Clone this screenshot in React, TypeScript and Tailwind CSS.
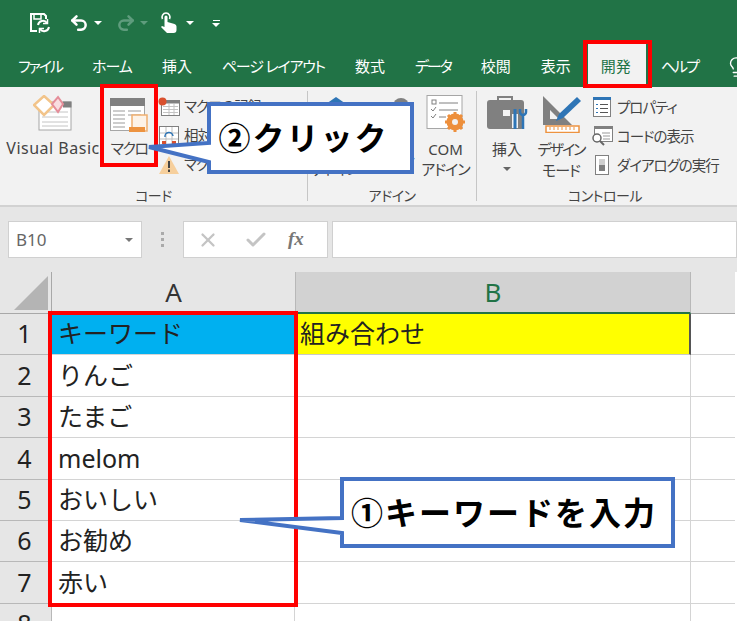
import { Undo2, Redo2, Lightbulb, X, Check } from 'lucide-react';

const tabs = [
  { label: 'ファイル', cls: 'tracking-[-2px]' },
  { label: 'ホーム', cls: 'tracking-[-1px]' },
  { label: '挿入', cls: '' },
  { label: 'ページ レイアウト', cls: 'tracking-[-1.2px]' },
  { label: '数式', cls: '' },
  { label: 'データ', cls: 'tracking-[-2px]' },
  { label: '校閲', cls: '' },
  { label: '表示', cls: '' },
  { label: '開発', cls: '' },
  { label: 'ヘルプ', cls: 'tracking-[-2px]' },
];
const rows = ['キーワード', 'りんご', 'たまご', 'melom', 'おいしい', 'お勧め', '赤い', ''];

function Caret({ className = '' }: { className?: string }) {
  return <span className={`inline-block w-0 h-0 border-x-[4px] border-x-transparent border-t-[4px] ${className}`} />;
}

function RibbonGroup({ label, className, children }: { label: string; className: string; children: React.ReactNode }) {
  return (
    <div className={`flex flex-col my-[4px] shrink-0 ${className}`}>
      <div className="flex h-[92px] shrink-0 items-start">{children}</div>
      <div className="shrink-0 text-center text-[14px] leading-[18px] tracking-[-0.5px] text-[#444] mt-[4px]">{label}</div>
    </div>
  );
}

function SmallItem({ icon, label }: { icon: React.ReactNode; label: string }) {
  return (
    <div className="flex h-[29px] items-center gap-[3px] text-[14.5px] tracking-[-1px] text-[#444] whitespace-nowrap">
      <span className="w-[24px] h-[24px] flex items-center justify-center shrink-0">{icon}</span>
      {label}
    </div>
  );
}

// box position comes in as classes, w/h are only for the outline path
function Callout({ className, w, h, tipX, tipY, y1, y2, text }: { className: string; w: number; h: number; tipX: number; tipY: number; y1: number; y2: number; text: string }) {
  return (
    <div className={`absolute flex items-center justify-center z-20 ${className}`}>
      <svg className="absolute left-0 top-0 overflow-visible" width={w} height={h}>
        <path d={`M2 2H${w - 2}V${h - 2}H2V${y2}L${tipX} ${tipY}L2 ${y1}Z`} fill="#fff" stroke="#4472c4" strokeWidth="4" />
      </svg>
      <span className="relative text-[32px] font-bold text-black tracking-[2px] whitespace-nowrap">{text}</span>
    </div>
  );
}

export default function App() {
  return (
    <div className="relative w-[737px] h-[621px] overflow-hidden bg-white font-['Noto_Sans','Noto_Sans_CJK_JP',sans-serif]">
      {/* title bar + tabs */}
      <div className="h-[87px] bg-[#217346] flex flex-col">
        <div className="h-[46px] flex items-center pl-[29px] text-white">
          <svg width="22" height="22" viewBox="0 0 22 22" fill="none" stroke="#fff" strokeWidth="2">
            <path d="M8 19H2V2h13l2 2v3" />
            <path d="M5 2v5h7V2" strokeWidth="1.5" />
            <path d="M9 13a5 5 0 0 1 9-2M20 15a5 5 0 0 1-9 2" />
            <path d="M18.500 7v4.500H14M10.500 21v-4.500H15" strokeWidth="1.5" />
          </svg>
          <Undo2 size={20} strokeWidth={3} className="ml-[18px]" />
          <Caret className="ml-[5px] border-t-white" />
          <Redo2 size={20} strokeWidth={3} className="ml-[14px] text-[#5f9c7d]" />
          <Caret className="ml-[4px] border-t-[#5f9c7d]" />
          <svg width="18" height="22" viewBox="0 0 18 22" className="ml-[12px]" fill="#fff">
            <path d="M2.500 7a4 4 0 1 1 7 0" fill="none" stroke="#fff" strokeWidth="1.600" />
            <path d="M4.500 5a1.500 1.500 0 0 1 3 0v5l7 2q2 .5 2 2.500V18a3 3 0 0 1-3 3H7l-6-6 1-1 2.500 1z" />
          </svg>
          <Caret className="ml-[8px] border-t-white" />
          <span className="ml-[18px] flex flex-col items-center gap-[2px]">
            <span className="block w-[7px] h-[1px] bg-white" />
            <Caret className="border-t-white" />
          </span>
        </div>
        <div className="relative flex-1 flex items-center pl-[18px] gap-[30px] text-[15px] text-white whitespace-nowrap [font-feature-settings:'palt']">
          {tabs.map((t) =>
            t.label === '開発' ? (
              <span key={t.label} className="relative text-[#217346] w-[31px] text-center">
                <span className="absolute left-[-13px] top-[-12px] w-[58px] h-[42px] bg-[#f2f2f2]" />
                <span className="relative">{t.label}</span>
              </span>
            ) : (
              <span key={t.label} className={t.cls}>{t.label}</span>
            ),
          )}
          <Lightbulb size={22} strokeWidth={1.5} className="-ml-[3px] shrink-0" />
        </div>
      </div>

      {/* ribbon */}
      <div className="h-[120px] bg-[#f2f2f2] border-b-2 border-[#d2d2d2] flex [font-feature-settings:'palt']">
        <RibbonGroup label="コード" className="w-[308px] border-r border-[#c6c6c6]">
          <div className="w-[106px] shrink-0 flex flex-col items-center pt-[4px] text-[16px] leading-[20px] tracking-[0.5px] text-[#444]">
            <svg width="40" height="36" viewBox="0 0 40 36">
              <rect x="6" y="7" width="32" height="28" fill="#fff" stroke="#a6a6a6" />
              <rect x="30" y="6.500" width="8.500" height="6" fill="#808080" />
              <path d="M9 17h26M9 22h26M9 27h26M9 31h26" stroke="#c4c4c4" />
              <path d="M11 1l10 9-10 10L1 10z" fill="#fff" stroke="#f2c48a" strokeWidth="2.500" />
              <path d="M25 2l5 7-5 8-6-8z" fill="#f9dde0" stroke="#e58d99" strokeWidth="2" />
            </svg>
            <span className="mt-[7px] whitespace-nowrap">Visual Basic</span>
          </div>
          <div className="w-[46px] shrink-0 flex flex-col items-center pt-[7px] text-[15px] leading-[20px] tracking-[-1.5px] text-[#444]">
            <svg width="38" height="35" viewBox="0 0 38 35">
              <rect x="0.500" y="0.500" width="34" height="32" fill="#fff" stroke="#a6a6a6" />
              <rect x="0" y="0" width="35" height="8" fill="#808080" />
              <path d="M3 13h12M18 13h13M3 17h12M18 17h13M3 21h12M3 25h12M3 29h12" stroke="#bdbdbd" strokeWidth="1.500" />
              <path d="M22 17h15v16H22z" fill="#fdf3e8" stroke="#f0b070" strokeWidth="1.500" />
              <path d="M19 29h16v5H19z" fill="#ed9340" />
            </svg>
            <span className="mt-[5px] whitespace-nowrap">マクロ</span>
          </div>
          <div className="ml-[5px] flex flex-col pt-[1px]">
            <SmallItem
              label="マクロの記録"
              icon={
                <svg width="22" height="20" viewBox="0 0 22 20">
                  <rect x="3.500" y="3.500" width="18" height="15" fill="#fff" stroke="#808080" />
                  <rect x="3.500" y="3.500" width="18" height="3" fill="#808080" />
                  <path d="M5 9.500h15M5 12.500h15M5 15.500h15M11 7v11M16 7v11" stroke="#c4c4c4" />
                  <circle cx="4.500" cy="4.500" r="4" fill="#d9502e" />
                </svg>
              }
            />
            <SmallItem
              label="相対参照で記録"
              icon={
                <svg width="20" height="20" viewBox="0 0 20 20">
                  <rect x="0.500" y="0.500" width="19" height="19" fill="#fff" stroke="#808080" />
                  <path d="M1 7h18M1 13h18M7 1v18M13 1v18" stroke="#bdbdbd" />
                  <path d="M6 11a4 4 0 0 1 8-1" fill="none" stroke="#2e75b6" strokeWidth="1.500" />
                  <rect x="3" y="15" width="4" height="3" fill="#d9502e" />
                  <rect x="13" y="15" width="4" height="3" fill="#d9502e" />
                </svg>
              }
            />
            <SmallItem
              label="マクロのセキュリティ"
              icon={
                <svg width="20" height="18" viewBox="0 0 20 18">
                  <path d="M10 0l10 18H0z" fill="#f6cf9c" />
                  <path d="M9 5h2v7H9zM9 13.500h2V16H9z" fill="#444" />
                </svg>
              }
            />
          </div>
        </RibbonGroup>

        <RibbonGroup label="アドイン" className="w-[169px] border-r border-[#c6c6c6]">
          <div className="w-[55px] shrink-0 flex flex-col items-center pt-[6px] text-[14.5px] leading-[20px] tracking-[-1px] text-[#444]">
            <svg width="26" height="26" viewBox="0 0 26 26"><path d="M13 0l13 9H0z" fill="#2e75b6" /></svg>
            <span className="mt-[36px] whitespace-nowrap">アドイン</span>
          </div>
          <div className="w-[55px] shrink-0 flex flex-col items-center text-center pt-[4px] text-[14.5px] leading-[20px] tracking-[-1px] text-[#444]">
            <svg width="22" height="22" viewBox="0 0 22 22" className="ml-[20px]"><circle cx="11" cy="11" r="8" fill="#808080" /></svg>
            <span className="mt-[13px]">Excel</span>
            <span className="whitespace-nowrap">アドイン</span>
          </div>
          <div className="w-[55px] shrink-0 flex flex-col items-center pt-[4px] text-[15px] leading-[20px] text-[#444]">
            <svg width="40" height="37" viewBox="0 0 40 37">
              <rect x="1" y="0.500" width="35" height="33" fill="#fff" stroke="#a6a6a6" />
              <path d="M13 8h19M13 15h19M13 22h7" stroke="#808080" />
              <rect x="6" y="5" width="4" height="4" fill="none" stroke="#808080" />
              <path d="M5 14l2 2 3-4M5 21l2 2 3-4" fill="none" stroke="#808080" />
              <circle cx="29" cy="27" r="6" fill="none" stroke="#ed8f3c" strokeWidth="5" />
              <path d="M29 17v20M19 27h20M22 20l14 14M36 20L22 34" stroke="#ed8f3c" strokeWidth="3" />
              <circle cx="29" cy="27" r="3" fill="#f2f2f2" />
            </svg>
            <span className="mt-[7px]">COM</span>
            <span className="whitespace-nowrap tracking-[-1px]">アドイン</span>
          </div>
        </RibbonGroup>

        <RibbonGroup label="コントロール" className="flex-1 pr-[4px]">
          <div className="flex text-[15px] leading-[20px] text-[#444] pl-[7px]">
            <div className="w-[46px] flex flex-col items-center pt-[5px] shrink-0">
              <svg width="42" height="36" viewBox="0 0 42 36">
                <path d="M12 5V1h14v4" fill="none" stroke="#808080" strokeWidth="2" />
                <rect x="1" y="4" width="37" height="29" rx="3" fill="#808080" />
                <rect x="17" y="14" width="7" height="6" fill="#f2f2f2" />
                <path d="M29 18v14" stroke="#f2f2f2" strokeWidth="6" />
                <path d="M29 13v20" stroke="#2e75b6" strokeWidth="3" />
                <path d="M40 13v3a3 3 0 0 1-6 0v-3M37 19v14" fill="none" stroke="#2e75b6" strokeWidth="2.500" />
              </svg>
              <span className="mt-[7px]">挿入</span>
              <Caret className="mt-[8px] border-t-[#666]" />
            </div>
            <div className="w-[58px] ml-[2px] flex flex-col items-center pt-[4px] shrink-0">
              <svg width="40" height="38" viewBox="0 0 40 38">
                <path d="M2 1v29h29zM9 15v9h9z" fill="#808080" fillRule="evenodd" />
                <path d="M36 2L18 19l-3 7 7-3L40 6z" fill="#2e75b6" />
                <rect x="5" y="31" width="33" height="6.500" fill="#fff" stroke="#ed9340" strokeWidth="1.500" />
                <path d="M9 32v3M13 32v3M17 32v3M21 32v3M25 32v3M29 32v3M33 32v3" stroke="#ed9340" />
              </svg>
              <span className="mt-[6px] whitespace-nowrap tracking-[-2px]">デザイン</span>
              <span className="mt-[1px] whitespace-nowrap tracking-[-1px]">モード</span>
            </div>
            <div className="flex flex-col pt-[1px] shrink-0">
              <SmallItem
                label="プロパティ"
                icon={
                  <svg width="18" height="20" viewBox="0 0 18 20">
                    <rect x="0.500" y="0.500" width="17" height="19" fill="#fff" stroke="#808080" />
                    <rect x="0" y="0" width="18" height="3" fill="#2e75b6" />
                    <path d="M7 7.500h8M7 11.500h8M7 15.500h8" stroke="#555" />
                    <path d="M3 7.500h2M3 11.500h2M3 15.500h2" stroke="#2e75b6" />
                  </svg>
                }
              />
              <SmallItem
                label="コードの表示"
                icon={
                  <svg width="22" height="20" viewBox="0 0 22 20">
                    <rect x="3.500" y="0.500" width="18" height="15" fill="#fff" stroke="#808080" />
                    <rect x="3" y="0" width="19" height="3" fill="#808080" />
                    <path d="M11 7h8M12 10h7M12 13h7" stroke="#999" />
                    <circle cx="6" cy="12" r="4" fill="#fff" stroke="#666" strokeWidth="1.500" />
                    <path d="M9 15l4 4" stroke="#666" strokeWidth="2" />
                  </svg>
                }
              />
              <SmallItem
                label="ダイアログの実行"
                icon={
                  <svg width="18" height="20" viewBox="0 0 18 20">
                    <rect x="2.500" y="0.500" width="13" height="19" fill="#fff" stroke="#808080" />
                    <rect x="6" y="4" width="6" height="6" fill="#d0d0d0" />
                    <rect x="6" y="10" width="6" height="6" fill="#808080" />
                  </svg>
                }
              />
            </div>
          </div>
        </RibbonGroup>
      </div>

      {/* formula bar */}
      <div className="h-[65px] bg-[#e6e6e6] flex items-center pl-[8px]">
        <div className="w-[134px] h-[37px] bg-white border border-[#d0d0d0] flex items-center justify-between pl-[7px] pr-[8px] text-[17px] text-[#666]">
          B10
          <Caret className="border-t-[#777]" />
        </div>
        <div className="w-[41px] flex flex-col items-center gap-[3px]">
          <span className="w-[3px] h-[3px] bg-[#aaa]" />
          <span className="w-[3px] h-[3px] bg-[#aaa]" />
          <span className="w-[3px] h-[3px] bg-[#aaa]" />
        </div>
        <div className="w-[145px] h-[37px] bg-white border border-[#d0d0d0] flex items-center pl-[13px] text-[#c4c4c4]">
          <X size={22} strokeWidth={2.5} />
          <Check size={24} strokeWidth={3} className="ml-[25px]" />
          <span className="ml-[20px] text-[19px] font-bold italic text-[#777] font-['Liberation_Serif',serif]">fx</span>
        </div>
        <div className="ml-[4px] flex-1 h-[37px] bg-white border border-[#d0d0d0]" />
      </div>

      {/* column headers */}
      <div className="flex h-[42px] w-[735px] text-[26px] text-[#333]">
        <div className="w-[52px] bg-[#e6e6e6] border-r border-b border-[#a8a8a8] relative overflow-hidden">
          <span className="absolute right-[3px] bottom-[3px] w-0 h-0 border-l-[34px] border-l-transparent border-b-[34px] border-b-[#b4b4b4]" />
        </div>
        <div className="w-[243px] bg-[#e6e6e6] border-b border-[#a8a8a8] flex items-center justify-center">A</div>
        <div className="w-[396px] bg-[#d2d2d2] border-b-2 border-[#217346] border-x border-x-[#b8b8b8] flex items-center justify-center text-[#217346]">B</div>
        <div className="flex-1 bg-[#e6e6e6] border-b border-[#a8a8a8]" />
      </div>

      {/* grid */}
      <div className="w-[735px]">
        {rows.map((r, i) => (
          <div key={i} className="flex h-[41.4px] text-[25px] text-[#222]">
            <div className="w-[52px] bg-[#e6e6e6] border-r border-b border-[#b8b8b8] flex items-center justify-center pr-[2px]">{i + 1}</div>
            <div className={`w-[243px] border-r border-b border-[#d4d4d4] flex items-center pl-[6px] ${i === 0 ? 'bg-[#00b0f0]' : ''}`}>{r}</div>
            <div className={`w-[396px] border-b flex items-center pl-[5px] ${i === 0 ? 'bg-[#ffff00] border-r-2 border-r-[#555] border-b-[#c8c8c8]' : 'border-r border-[#d4d4d4]'}`}>{i === 0 ? '組み合わせ' : ''}</div>
            <div className="flex-1 border-b border-[#d4d4d4]" />
          </div>
        ))}
      </div>

      {/* annotations */}
      <div className="absolute left-[583px] top-[40px] w-[69px] h-[48px] border-4 border-[#ff0000] z-10" />
      <div className="absolute left-[100px] top-[84px] w-[58px] h-[83px] border-4 border-[#ff0000] z-10" />
      <div className="absolute left-[48px] top-[311px] w-[250px] h-[296px] border-4 border-[#ff0000] z-10" />
      <Callout className="left-[207px] top-[102px] w-[207px] h-[72px] pr-[14px]" w={207} h={72} tipX={-58} tipY={45} y1={41} y2={60} text="②クリック" />
      <Callout className="left-[340px] top-[477px] w-[335px] h-[71px] pr-[7px]" w={335} h={71} tipX={-100} tipY={43} y1={41} y2={56} text="①キーワードを入力" />
    </div>
  );
}
